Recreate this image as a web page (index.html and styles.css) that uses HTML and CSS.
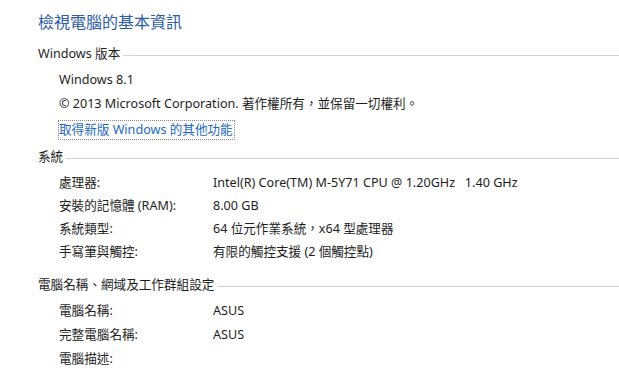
FILE: index.html
```html
<!DOCTYPE html>
<html lang="zh-Hant">
<head>
<meta charset="utf-8">
<title>系統</title>
<link rel="stylesheet" href="styles.css">
</head>
<body>
<div class="page">
  <h1 class="title">檢視電腦的基本資訊</h1>

  <div class="hdr hdr-1"><span>Windows 版本</span><i class="rule"></i></div>
  <div class="block">
    <div class="line first">Windows 8.1</div>
    <div class="line">© 2013 Microsoft Corporation. 著作權所有，並保留一切權利。</div>
    <div class="line linkline"><a class="link" href="#">取得新版 Windows 的其他功能</a></div>
  </div>

  <div class="hdr hdr-2"><span>系統</span><i class="rule"></i></div>
  <div class="grid g2">
    <div>處理器:</div><div>Intel(R) Core(TM) M-5Y71 CPU @ 1.20GHz&nbsp;&nbsp; 1.40 GHz</div>
    <div>安裝的記憶體 (RAM):</div><div>8.00 GB</div>
    <div>系統類型:</div><div>64 位元作業系統，x64 型處理器</div>
    <div>手寫筆與觸控:</div><div>有限的觸控支援 (2 個觸控點)</div>
  </div>

  <div class="hdr hdr-3"><span>電腦名稱、網域及工作群組設定</span><i class="rule"></i></div>
  <div class="grid g3">
    <div>電腦名稱:</div><div>ASUS</div>
    <div>完整電腦名稱:</div><div>ASUS</div>
    <div>電腦描述:</div><div></div>
  </div>
</div>
</body>
</html>
```

FILE: styles.css
```css
html, body {
  margin: 0;
  padding: 0;
  background: #ffffff;
}
body {
  font-family: "Noto Sans", "Noto Sans CJK TC", sans-serif;
  font-size: 12.6px;
  color: #1e1e1e;
  overflow: hidden;
}
.page {
  padding: 10px 0 0 38px;
}
.title {
  margin: 0;
  font-size: 16px;
  font-weight: normal;
  line-height: 22px;
  color: #2d5ba9;
  font-family: "Noto Sans CJK TC", "Noto Sans", sans-serif;
}
.hdr {
  display: flex;
  align-items: center;
  height: 20px;
  line-height: 20px;
}
.hdr span {
  white-space: nowrap;
  padding-right: 3px;
}
.rule {
  flex: 1;
  height: 0;
  border-top: 1px solid #d3d3d3;
  margin-top: 3px;
}
.hdr-1 { margin-top: 12px; }
.hdr-2 { margin-top: 5px; }
.hdr-3 { margin-top: 12px; }
.block {
  padding-left: 21px;
  margin-top: 4px;
}
.line {
  line-height: 24px;
  height: 24px;
}
.linkline {
  margin-top: 2px;
}
.link {
  color: #1c68c4;
  text-decoration: none;
  border: 1px dotted #8a8a8a;
  padding: 0 1px 1px 0;
  margin-left: -1px;
}
.grid {
  display: grid;
  grid-template-columns: 154px auto;
  padding-left: 21px;
  margin-top: 4px;
}
.g2 > div {
  line-height: 23px;
  height: 23px;
  white-space: nowrap;
}
.g3 > div {
  line-height: 24px;
  height: 24px;
  white-space: nowrap;
}
```
